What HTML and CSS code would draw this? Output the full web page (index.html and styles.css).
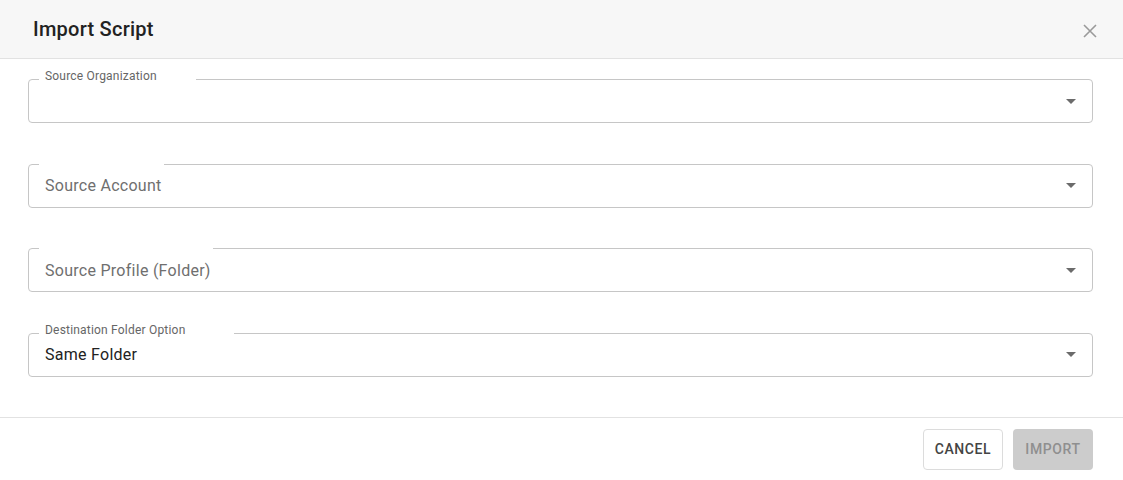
FILE: index.html
```html
<!DOCTYPE html>
<html lang="en">
<head>
  <meta charset="UTF-8" />
  <meta name="viewport" content="width=device-width, initial-scale=1.0" />
  <title>Import Script</title>
  <link rel="stylesheet" href="styles.css">
</head>
<body>
  <div class="dialog">
    <header class="dialog-header">
      <h2>Import Script</h2>
      <button class="close-btn" aria-label="Close">
        <svg width="14" height="14" viewBox="0 0 14 14"><path d="M1 1L13 13M13 1L1 13" stroke="#9a9a9a" stroke-width="1.6" fill="none"/></svg>
      </button>
    </header>

    <div class="dialog-body">
      <div class="field">
        <label class="field-label">Source Organization</label>
        <div class="field-value"></div>
        <svg class="arrow" width="10" height="5" viewBox="0 0 10 5"><path d="M0 0H10L5 5Z" fill="#6b6b6b"/></svg>
        <fieldset class="outline"><legend><span>Source Organization</span></legend></fieldset>
      </div>

      <div class="field">
        <div class="field-value placeholder">Source Account</div>
        <svg class="arrow" width="10" height="5" viewBox="0 0 10 5"><path d="M0 0H10L5 5Z" fill="#6b6b6b"/></svg>
        <fieldset class="outline"><legend><span>Source Account</span></legend></fieldset>
      </div>

      <div class="field">
        <div class="field-value placeholder">Source Profile (Folder)</div>
        <svg class="arrow" width="10" height="5" viewBox="0 0 10 5"><path d="M0 0H10L5 5Z" fill="#6b6b6b"/></svg>
        <fieldset class="outline"><legend><span>Source Profile (Folder)</span></legend></fieldset>
      </div>

      <div class="field">
        <label class="field-label">Destination Folder Option</label>
        <div class="field-value">Same Folder</div>
        <svg class="arrow" width="10" height="5" viewBox="0 0 10 5"><path d="M0 0H10L5 5Z" fill="#6b6b6b"/></svg>
        <fieldset class="outline"><legend><span>Destination Folder Option</span></legend></fieldset>
      </div>
    </div>

    <footer class="dialog-footer">
      <button class="btn btn-cancel">Cancel</button>
      <button class="btn btn-import" disabled>Import</button>
    </footer>
  </div>
</body>
</html>
```

FILE: styles.css
```css
body {
  margin: 0;
  padding: 0;
  background-color: #fff;
  font-family: Roboto, "Liberation Sans", Arial, sans-serif;
  color: #222;
}
.dialog {
  width: 1123px;
  height: 480px;
  display: flex;
  flex-direction: column;
  background: #fff;
  overflow: hidden;
}
.dialog-header {
  height: 58px;
  background-color: #f7f7f7;
  border-bottom: 1px solid #e2e2e2;
  display: flex;
  align-items: center;
  justify-content: space-between;
  padding: 0 26px 0 33px;
  flex-shrink: 0;
}
.dialog-header h2 {
  margin: 0;
  font-size: 20px;
  font-weight: 500;
  letter-spacing: 0.25px;
  color: #222;
}
.close-btn {
  width: 14px;
  height: 14px;
  padding: 0;
  margin-top: 4px;
  border: none;
  background: none;
  cursor: pointer;
  display: flex;
}
.dialog-body {
  padding: 20px 30px 40px 28px;
  display: flex;
  flex-direction: column;
  gap: 40.5px;
}
.field {
  position: relative;
  height: 44px;
  display: flex;
  align-items: center;
  padding: 0 17px;
}
.field-label {
  position: absolute;
  left: 17px;
  top: -9px;
  font-size: 12px;
  line-height: 12px;
  letter-spacing: 0.2px;
  color: #666;
}
.field-value {
  flex: 1;
  font-size: 16px;
  letter-spacing: 0.27px;
  color: #222;
}
.field-value.placeholder {
  color: #6f6f6f;
}
.arrow {
  flex-shrink: 0;
}
.outline {
  position: absolute;
  top: -5px;
  left: 0;
  right: 0;
  bottom: 0;
  margin: 0;
  padding: 0 10px;
  border: 1px solid #c6c6c6;
  border-radius: 4px;
  pointer-events: none;
}
.outline legend {
  padding: 0;
  height: 11px;
  font-size: 16px;
  line-height: 11px;
  letter-spacing: 0.27px;
  visibility: hidden;
  white-space: nowrap;
}
.outline legend span {
  display: inline-block;
  padding: 0 4px;
}
.dialog-footer {
  border-top: 1px solid #e2e2e2;
  display: flex;
  justify-content: flex-end;
  gap: 10px;
  padding: 11px 30px 11px 0;
}
.btn {
  height: 41px;
  width: 80px;
  border-radius: 4px;
  font-family: inherit;
  font-size: 14px;
  font-weight: 500;
  letter-spacing: 0.6px;
  text-transform: uppercase;
  cursor: pointer;
}
.btn-cancel {
  background: #fff;
  border: 1px solid #dcdcdc;
  color: #444;
}
.btn-import {
  background: #cccccc;
  border: none;
  color: #8f8f8f;
  cursor: default;
}
```
